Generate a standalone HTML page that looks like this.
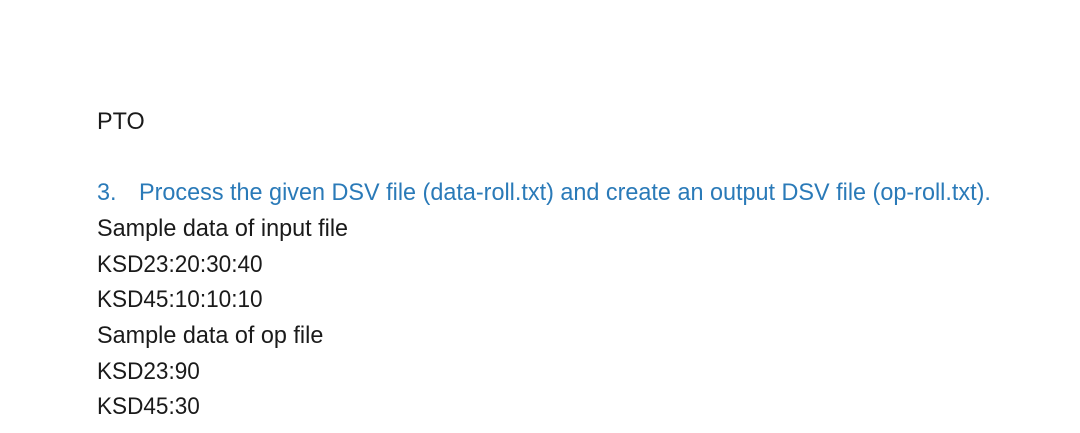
<!DOCTYPE html>
<html><head><style>
body{margin:0;width:1080px;height:433px;background:#fff;overflow:hidden;position:relative;font-family:"Liberation Sans",sans-serif;}
.l{position:absolute;left:97px;font-size:24px;line-height:24px;color:#1a1a1a;white-space:nowrap;transform:scaleX(0.975);transform-origin:0 0;}
.n{transform:scaleX(0.94);}
.b{color:#2a7ab8;}
</style></head><body>
<div class="l" style="top:110px">PTO</div>
<div class="l b" style="top:181px">3.</div>
<div class="l b" style="top:181px;left:139px">Process the given DSV file (data-roll.txt) and create an output DSV file (op-roll.txt).</div>
<div class="l" style="top:217px">Sample data of input file</div>
<div class="l n" style="top:253px">KSD23:20:30:40</div>
<div class="l n" style="top:288px">KSD45:10:10:10</div>
<div class="l" style="top:324px">Sample data of op file</div>
<div class="l n" style="top:360px">KSD23:90</div>
<div class="l n" style="top:395px">KSD45:30</div>
</body></html>
